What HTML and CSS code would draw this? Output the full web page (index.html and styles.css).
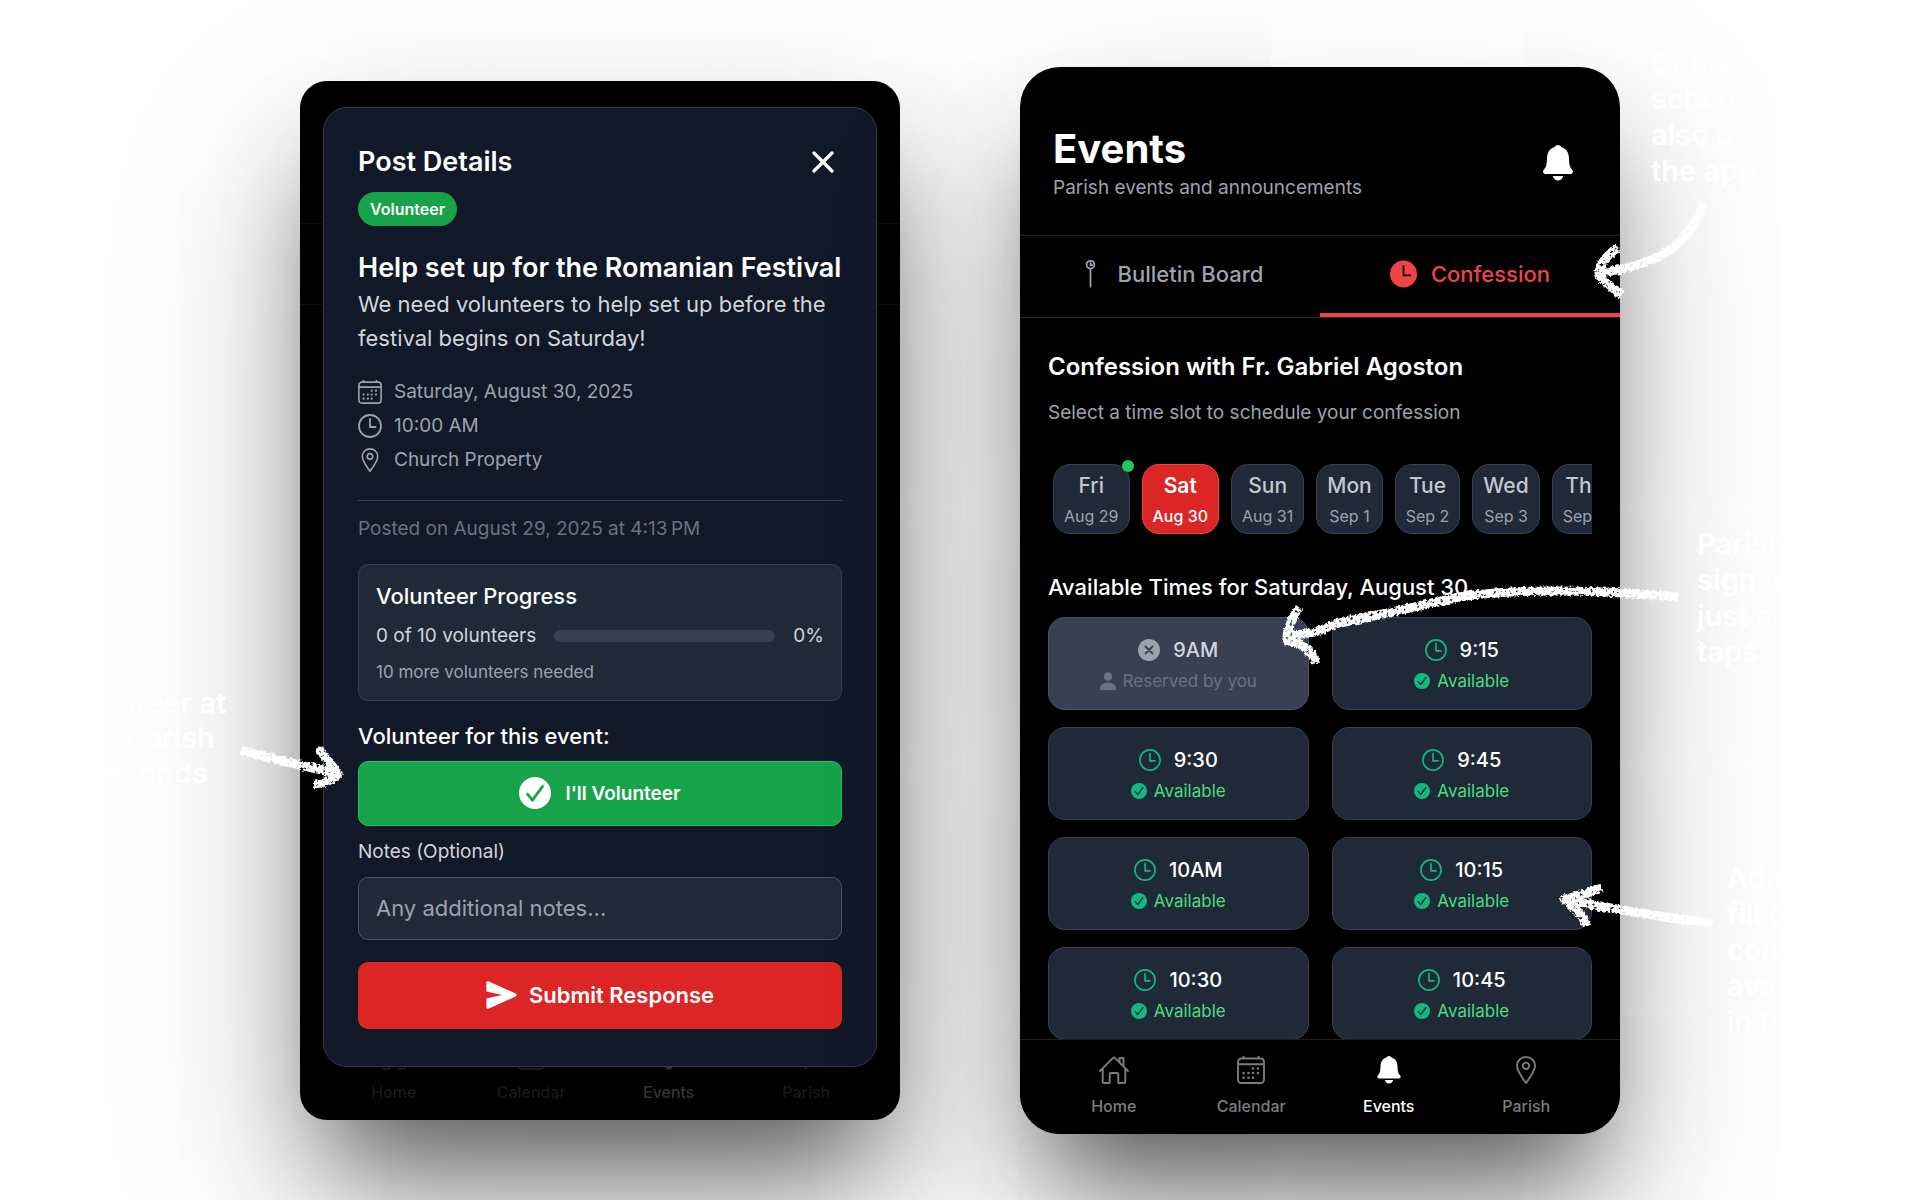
FILE: index.html
```html
<!DOCTYPE html>
<html lang="en">
<head>
    <meta charset="UTF-8">
    <meta name="viewport" content="width=device-width, initial-scale=1.0">
    <title>Parish App - Events</title>
    <link rel="stylesheet" href="styles.css">
</head>
<body>
    <!-- Shared icons -->
    <svg class="sprite" aria-hidden="true">
        <defs>
            <filter id="chalk" x="-10%" y="-20%" width="120%" height="140%">
                <feTurbulence type="fractalNoise" baseFrequency="0.3" numOctaves="3" seed="4" result="noise"/>
                <feDisplacementMap in="SourceGraphic" in2="noise" scale="5" xChannelSelector="R" yChannelSelector="G" result="rough"/>
                <feColorMatrix in="noise" type="matrix" values="0 0 0 0 1  0 0 0 0 1  0 0 0 0 1  0 0 6 0 -1.3" result="grain"/>
                <feComposite in="rough" in2="grain" operator="in"/>
            </filter>
        </defs>
        <symbol id="home" viewBox="0 0 30 28">
            <path d="M1 15 13.8 2.2a1.7 1.7 0 0 1 2.4 0L29 15M3.7 12.5v13.2c0 .8.5 1.3 1.3 1.3h5.7v-8.5c0-.9.6-1.5 1.5-1.5h5.6c.9 0 1.5.6 1.5 1.5V27H25c.8 0 1.3-.5 1.3-1.3V12.5M20.5 6V2h4v8.500" fill="none" stroke="currentColor" stroke-width="1.900" stroke-linecap="round" stroke-linejoin="round"/>
        </symbol>
        <symbol id="calendar" viewBox="0 0 28 28">
            <rect x="1" y="2.500" width="26" height="24.500" rx="3.500" fill="none" stroke="currentColor" stroke-width="1.900"/>
            <path d="M1 8.300h26M6.500 0v2.500M21.500 0v2.500" stroke="currentColor" stroke-width="1.900"/>
            <path d="M16 12.500h.01M21 12.500h.01M6.500 17h.01M11.500 17h.01M16 17h.01M21 17h.01M6.500 21.800h.01M11.500 21.800h.01M16 21.800h.01" stroke="currentColor" stroke-width="2.600" stroke-linecap="round"/>
        </symbol>
        <symbol id="clock" viewBox="0 0 24 24">
            <circle cx="12" cy="12" r="11" fill="none" stroke="currentColor" stroke-width="1.800"/>
            <path d="M12 5v8h5.500" fill="none" stroke="currentColor" stroke-width="1.800" stroke-linecap="round" stroke-linejoin="round"/>
        </symbol>
        <symbol id="clock-fill" viewBox="0 0 28 28">
            <circle cx="14" cy="14" r="14" fill="currentColor"/>
            <path d="M14 5.500v10h7" fill="none" stroke="#000" stroke-width="1.800" stroke-linecap="round" stroke-linejoin="round"/>
        </symbol>
        <symbol id="pin" viewBox="0 0 20 28">
            <path d="M10 1c5 0 9 3.700 9 8.600C19 15.500 13 23 10 27 7 23 1 15.500 1 9.600 1 4.700 5 1 10 1z" fill="none" stroke="currentColor" stroke-width="1.900" stroke-linejoin="round"/>
            <circle cx="10" cy="9.800" r="3.200" fill="none" stroke="currentColor" stroke-width="1.900"/>
        </symbol>
        <symbol id="bell" viewBox="0 0 30 36">
            <path d="M15 0c1.700 0 2.800 1 3.600 2.200 4.800 1.300 7.100 5.200 7.300 10.500.3 7.300.9 9.500 3.300 12 1.700 1.900.5 4.300-1.700 4.300h-25C.3 29-.9 26.600.8 24.700c2.400-2.500 3-4.700 3.300-12 .2-5.300 2.500-9.200 7.300-10.500C12.200 1 13.300 0 15 0zM9.800 31h10.400c-.4 2.600-2.600 4.500-5.200 4.500S10.200 33.600 9.800 31z" fill="currentColor"/>
        </symbol>
        <symbol id="pushpin" viewBox="0 0 12 30">
            <circle cx="6" cy="5" r="4.200" fill="none" stroke="currentColor" stroke-width="1.900"/>
            <path d="M6 3v2.500h2M6 9v19.500" fill="none" stroke="currentColor" stroke-width="1.900" stroke-linecap="round"/>
        </symbol>
        <symbol id="close" viewBox="0 0 22 22">
            <path d="M2 2l18 18M20 2 2 20" stroke="currentColor" stroke-width="3.200" stroke-linecap="round"/>
        </symbol>
        <symbol id="send" viewBox="0 0 31 28">
            <path d="M.4 1.600C.4.500 1.400-.2 2.400.3l27.300 12.200c1.300.6 1.300 2.400 0 3L2.400 27.700c-1 .5-2-.2-2-1.300v-9l15.800-3.400L.4 10.600z" fill="currentColor"/>
        </symbol>
        <symbol id="person" viewBox="0 0 16 18">
            <circle cx="8" cy="4.500" r="4.200" fill="currentColor"/>
            <path d="M0 16.500C0 12.800 3.500 10.500 8 10.500s8 2.300 8 6c0 1-.5 1.500-1.500 1.500h-13C.5 18 0 17.500 0 16.500z" fill="currentColor"/>
        </symbol>
        <symbol id="check" viewBox="0 0 32 32">
            <circle cx="16" cy="16" r="16" fill="currentColor" stroke="none"/>
            <path d="M8.500 17.200l5 6L23.500 9.500" fill="none" stroke-width="2.800" stroke-linecap="round" stroke-linejoin="round"/>
        </symbol>
        <symbol id="cross" viewBox="0 0 22 22">
            <circle cx="11" cy="11" r="11" fill="currentColor" stroke="none"/>
            <path d="M7.500 7.500l7 7M14.500 7.500l-7 7" stroke-width="2" stroke-linecap="round"/>
        </symbol>
    </svg>

    <main class="showcase">
        <!-- Post details -->
        <section class="phone phone-details">
            <div class="backdrop">
                <div class="backdrop-header"></div>
                <div class="backdrop-tabs"></div>
                <nav class="tabbar">
                    <a href="#"><svg class="icon-home"><use href="#home"/></svg>Home</a>
                    <a href="#"><svg class="icon-calendar"><use href="#calendar"/></svg>Calendar</a>
                    <a href="#" class="active"><svg class="icon-bell"><use href="#bell"/></svg>Events</a>
                    <a href="#"><svg class="icon-pin"><use href="#pin"/></svg>Parish</a>
                </nav>
            </div>

            <div class="modal">
                <div class="modal-header">
                    <h2>Post Details</h2>
                    <button type="button" class="close-btn" aria-label="Close"><svg><use href="#close"/></svg></button>
                </div>
                <span class="badge">Volunteer</span>
                <h3 class="post-title">Help set up for the Romanian Festival</h3>
                <p class="post-text">We need volunteers to help set up before the festival begins on Saturday!</p>

                <ul class="meta">
                    <li><svg class="meta-icon"><use href="#calendar"/></svg>Saturday, August 30, 2025</li>
                    <li><svg class="meta-icon"><use href="#clock"/></svg>10:00 AM</li>
                    <li><svg class="meta-icon"><use href="#pin"/></svg>Church Property</li>
                </ul>
                <p class="posted">Posted on August 29, 2025 at 4:13&#8239;PM</p>

                <div class="progress-card">
                    <h4>Volunteer Progress</h4>
                    <div class="progress-row">
                        <span>0 of 10 volunteers</span>
                        <div class="bar"><div class="bar-fill" style="width: 0%"></div></div>
                        <span>0%</span>
                    </div>
                    <p>10 more volunteers needed</p>
                </div>

                <form class="response">
                    <h4>Volunteer for this event:</h4>
                    <button type="button" class="btn volunteer-btn"><svg><use href="#check"/></svg>I'll Volunteer</button>
                    <label for="notes">Notes (Optional)</label>
                    <input type="text" id="notes" placeholder="Any additional notes...">
                    <button type="submit" class="btn submit-btn"><svg><use href="#send"/></svg>Submit Response</button>
                </form>
            </div>

            <p class="note note-volunteer">Volunteer at<br>your parish<br>in seconds</p>
            <svg class="arrows" aria-hidden="true">
                <path d="M-59 669Q-22 680 36 692M18 667Q29 680 38 693Q30 702 14 703"/>
            </svg>
        </section>

        <!-- Confession schedule -->
        <section class="phone phone-events">
            <header class="events-header">
                <div>
                    <h1>Events</h1>
                    <p>Parish events and announcements</p>
                </div>
                <button type="button" class="bell-btn" aria-label="Notifications"><svg><use href="#bell"/></svg></button>
            </header>

            <div class="tabs">
                <button type="button" class="tab"><svg><use href="#pushpin"/></svg>Bulletin Board</button>
                <button type="button" class="tab active"><svg><use href="#clock-fill"/></svg>Confession</button>
            </div>

            <div class="content">
                <h2>Confession with Fr. Gabriel Agoston</h2>
                <p class="hint">Select a time slot to schedule your confession</p>

                <div class="days">
                    <button type="button" class="day today">Fri<small>Aug 29</small></button>
                    <button type="button" class="day selected">Sat<small>Aug 30</small></button>
                    <button type="button" class="day">Sun<small>Aug 31</small></button>
                    <button type="button" class="day">Mon<small>Sep 1</small></button>
                    <button type="button" class="day">Tue<small>Sep 2</small></button>
                    <button type="button" class="day">Wed<small>Sep 3</small></button>
                    <button type="button" class="day">Thu<small>Sep 4</small></button>
                </div>

                <h3>Available Times for Saturday, August 30</h3>
                <div class="slots">
                    <button type="button" class="slot reserved">
                        <span class="time"><svg><use href="#cross"/></svg>9AM</span>
                        <span class="status"><svg><use href="#person"/></svg>Reserved by you</span>
                    </button>
                    <button type="button" class="slot">
                        <span class="time"><svg><use href="#clock"/></svg>9:15</span>
                        <span class="status"><svg><use href="#check"/></svg>Available</span>
                    </button>
                    <button type="button" class="slot">
                        <span class="time"><svg><use href="#clock"/></svg>9:30</span>
                        <span class="status"><svg><use href="#check"/></svg>Available</span>
                    </button>
                    <button type="button" class="slot">
                        <span class="time"><svg><use href="#clock"/></svg>9:45</span>
                        <span class="status"><svg><use href="#check"/></svg>Available</span>
                    </button>
                    <button type="button" class="slot">
                        <span class="time"><svg><use href="#clock"/></svg>10AM</span>
                        <span class="status"><svg><use href="#check"/></svg>Available</span>
                    </button>
                    <button type="button" class="slot">
                        <span class="time"><svg><use href="#clock"/></svg>10:15</span>
                        <span class="status"><svg><use href="#check"/></svg>Available</span>
                    </button>
                    <button type="button" class="slot">
                        <span class="time"><svg><use href="#clock"/></svg>10:30</span>
                        <span class="status"><svg><use href="#check"/></svg>Available</span>
                    </button>
                    <button type="button" class="slot">
                        <span class="time"><svg><use href="#clock"/></svg>10:45</span>
                        <span class="status"><svg><use href="#check"/></svg>Available</span>
                    </button>
                </div>
            </div>

            <nav class="tabbar">
                <a href="#"><svg class="icon-home"><use href="#home"/></svg>Home</a>
                <a href="#"><svg class="icon-calendar"><use href="#calendar"/></svg>Calendar</a>
                <a href="#" class="active"><svg class="icon-bell"><use href="#bell"/></svg>Events</a>
                <a href="#"><svg class="icon-pin"><use href="#pin"/></svg>Parish</a>
            </nav>

            <p class="note note-schedule">Confession<br>schedules<br>also be<br>the app,</p>
            <p class="note note-signup">Parishioners<br>sign up in<br>just a few<br>taps</p>
            <p class="note note-admin">Admins<br>fill out<br>confession<br>availability<br>in Paro</p>
            <svg class="arrows" aria-hidden="true">
                <path d="M683 137Q672 168 648 184T579 206M598 181Q578 194 579 208Q583 215 602 228"/>
                <path d="M658 530Q520 518 440 530Q350 550 315 557Q290 570 268 567M279 540Q266 562 267 573Q290 578 296 596"/>
                <path d="M692 856Q610 846 544 832M582 821Q560 829 544 832Q560 844 567 858"/>
            </svg>
        </section>
    </main>
</body>
</html>
```

FILE: styles.css
```css
* { margin: 0; padding: 0; box-sizing: border-box; }

body {
    font-family: Inter, 'Liberation Sans', sans-serif;
    background: #fff;
    color: #fff;
}

button, input { font-family: inherit; }
button { border: none; background: none; color: inherit; cursor: pointer; }
a { text-decoration: none; color: inherit; }
ul { list-style: none; }

.sprite { position: absolute; width: 0; height: 0; }

.showcase {
    display: flex;
    justify-content: center;
    align-items: center;
    gap: 120px;
    min-height: 100vh;
    overflow: hidden;
}

.phone {
    position: relative;
    flex: 0 1 600px;
    background: #000;
    box-shadow: 0 70px 100px -30px rgba(0, 0, 0, 0.55), 0 80px 190px -4px rgba(0, 0, 0, 0.25);
}

.phone-details {
    padding: 26px 23px 53px;
    border-radius: 27px;
}

.phone-events {
    border-radius: 40px;
}

/* Dimmed app behind the modal */
.backdrop {
    position: absolute;
    inset: 0;
    display: flex;
    flex-direction: column;
    opacity: 0.2;
}

.backdrop-header {
    height: 143px;
    border-bottom: 1px solid #374151;
}

.backdrop-tabs {
    height: 81px;
    border-bottom: 1px solid #374151;
}

.backdrop .tabbar { margin-top: auto; }

.tabbar {
    position: relative;
    display: flex;
    padding: 16px 25px 18px;
    border-top: 1px solid #1f1f1f;
    border-radius: 0 0 40px 40px;
    background: #000;
}

.tabbar a {
    flex: 1;
    display: flex;
    flex-direction: column;
    align-items: center;
    gap: 12px;
    font-size: 16px;
    line-height: 20px;
    font-weight: 500;
    color: #7c7c80;
}

.tabbar a.active { color: #fff; }
.tabbar svg { height: 28px; }
.icon-home { width: 30px; }
.icon-calendar { width: 28px; }
.icon-bell { width: 24px; }
.icon-pin { width: 20px; }

/* Modal */
.modal {
    position: relative;
    padding: 37px 34px;
    background: #111827;
    border: 1px solid #2f3a4b;
    border-radius: 24px;
}

.modal-header {
    display: flex;
    justify-content: space-between;
    align-items: center;
    margin-bottom: 13px;
}

.modal-header h2, .post-title {
    font-size: 27px;
    line-height: 34px;
    font-weight: 600;
}

.close-btn {
    width: 34px;
    height: 34px;
    margin-right: 2px;
}

.close-btn svg { display: block; width: 22px; height: 22px; margin: auto; }

.badge {
    display: block;
    width: max-content;
    padding: 0 12px;
    border-radius: 17px;
    background: #16a34a;
    font-size: 16px;
    line-height: 34px;
    font-weight: 600;
}

.post-title { margin-top: 25px; }

.post-text {
    margin-top: 2px;
    font-size: 22px;
    line-height: 34px;
    color: #d1d5db;
}

.meta {
    margin-top: 20px;
    padding-bottom: 23px;
    border-bottom: 1px solid #374151;
}

.meta li {
    display: flex;
    align-items: center;
    gap: 12px;
    font-size: 19px;
    line-height: 34px;
    color: #9ca3af;
}

.meta-icon { width: 24px; height: 24px; }

.posted {
    margin-top: 14px;
    font-size: 19px;
    line-height: 28px;
    color: #6b7280;
}

.progress-card {
    margin-top: 21px;
    padding: 17px 17px 16px;
    background: #1f2937;
    border: 1px solid #374151;
    border-radius: 10px;
}

.progress-card h4, .response h4 {
    font-size: 22px;
    line-height: 28px;
    font-weight: 500;
}

.progress-row {
    display: flex;
    align-items: center;
    gap: 18px;
    margin: 12px 0 10px;
    font-size: 19px;
    line-height: 28px;
    color: #d1d5db;
}

.bar {
    flex: 1;
    height: 12px;
    border-radius: 6px;
    background: #374151;
    overflow: hidden;
}

.bar-fill { height: 100%; background: #16a34a; }

.progress-card p {
    font-size: 17px;
    line-height: 24px;
    color: #9ca3af;
}

.response {
    display: flex;
    flex-direction: column;
    margin-top: 21px;
}

.btn {
    display: flex;
    align-items: center;
    justify-content: center;
    gap: 14px;
    border-radius: 10px;
}

.volunteer-btn {
    height: 65px;
    margin: 11px 0 14px;
    background: #16a34a;
    border: 1px solid #22c55e;
    font-size: 19px;
    font-weight: 600;
}

.volunteer-btn svg { width: 32px; height: 32px; stroke: #16a34a; }

.response label {
    font-size: 19px;
    line-height: 24px;
    color: #d1d5db;
}

.response input {
    height: 63px;
    margin: 13px 0 22px;
    padding: 0 17px;
    background: #1f2937;
    border: 1px solid #4b5563;
    border-radius: 10px;
    color: #fff;
    font-size: 22px;
}

.response input::placeholder { color: #9ca3af; }

.submit-btn {
    height: 67px;
    gap: 12px;
    background: #dc2626;
    font-size: 22px;
    font-weight: 600;
}

.submit-btn svg { width: 31px; height: 28px; }

/* Events screen */
.events-header {
    display: flex;
    justify-content: space-between;
    align-items: center;
    padding: 58px 47px 33px 33px;
    border-bottom: 1px solid #1f2937;
}

.events-header h1 {
    font-size: 40px;
    line-height: 48px;
    font-weight: 700;
}

.events-header p {
    font-size: 19px;
    line-height: 29px;
    color: #9ca3af;
}

.bell-btn svg { display: block; width: 30px; height: 36px; }

.tabs {
    display: flex;
    border-bottom: 1px solid #1f2937;
}

.tab {
    flex: 1;
    display: flex;
    align-items: center;
    justify-content: center;
    gap: 14px;
    height: 81px;
    border-bottom: 4px solid transparent;
    font-size: 22px;
    font-weight: 500;
    color: #9ca3af;
}

.tab svg { width: 27px; height: 28px; }

.tab.active {
    color: #ef4444;
    border-bottom-color: #ef4444;
}

.content {
    margin-bottom: -1px;
    padding: 33px 28px 0;
}

.content h2 {
    font-size: 24px;
    line-height: 32px;
    font-weight: 600;
}

.hint {
    margin-top: 16px;
    font-size: 19px;
    line-height: 28px;
    color: #9ca3af;
}

.days {
    display: flex;
    gap: 12px;
    margin: 29px 0 31px;
    padding: 8px 5px;
    overflow: hidden;
}

.day {
    position: relative;
    flex: none;
    display: flex;
    flex-direction: column;
    align-items: center;
    justify-content: center;
    gap: 4px;
    height: 70px;
    padding: 2px 10px 0;
    background: #1f2937;
    border: 1px solid #374151;
    border-radius: 17px;
    font-size: 21px;
    line-height: 28px;
    font-weight: 500;
    color: #c3c7cd;
}

.day small {
    font-size: 16px;
    line-height: 24px;
    font-weight: 400;
    color: #9ca3af;
}

.day.selected {
    background: #dc2626;
    border-color: #ef4444;
    color: #fff;
    font-weight: 600;
}

.day.selected small { color: #fff; font-weight: 500; }

.day.today::after {
    content: '';
    position: absolute;
    top: -5px;
    right: -5px;
    width: 12px;
    height: 12px;
    border-radius: 50%;
    background: #22c55e;
}

.content h3 {
    font-size: 22px;
    line-height: 28px;
    font-weight: 500;
}

.slots {
    display: grid;
    grid-template-columns: 1fr 1fr;
    gap: 17px 23px;
    margin-top: 16px;
}

.slot {
    display: flex;
    flex-direction: column;
    align-items: center;
    justify-content: center;
    gap: 7px;
    height: 93px;
    padding-top: 2px;
    background: #1f2937;
    border: 1px solid #374151;
    border-radius: 17px;
}

.slot span { display: flex; align-items: center; }

.time {
    gap: 13px;
    font-size: 20px;
    line-height: 26px;
    font-weight: 500;
}

.time svg { width: 22px; height: 22px; color: #10b981; }

.status {
    gap: 7px;
    font-size: 17px;
    line-height: 22px;
    color: #4ade80;
}

.status svg { width: 16px; height: 16px; color: #10b981; stroke: #1f2937; }

.slot.reserved {
    background: #374151;
    border-color: #4b5563;
}

.reserved .time { color: #d1d5db; }
.reserved .time svg { color: #9ca3af; stroke: #374151; }
.reserved .status { color: #6b7280; }
.reserved .status svg { height: 18px; color: #6b7280; stroke: none; }

/* Handwritten callouts around the phones */
.note {
    position: absolute;
    font-size: 29px;
    line-height: 36px;
    font-weight: 600;
    white-space: nowrap;
}

.note-volunteer { left: -244px; top: 604px; line-height: 35px; }
.note-schedule { left: 631px; top: -22px; }
.note-signup { left: 677px; top: 459px; }
.note-admin { left: 707px; top: 793px; }

.arrows {
    position: absolute;
    inset: 0;
    width: 100%;
    height: 100%;
    overflow: visible;
    pointer-events: none;
}

.arrows path {
    fill: none;
    stroke: #fff;
    stroke-width: 9;
    stroke-linejoin: round;
    filter: url(#chalk);
}
```
